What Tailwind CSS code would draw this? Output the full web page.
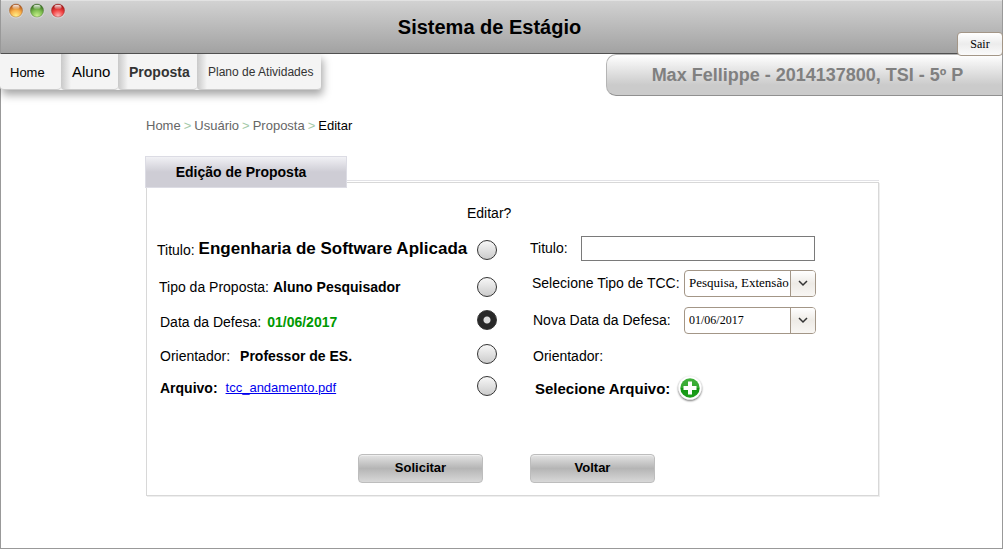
<!DOCTYPE html>
<html lang="pt-BR">
<head>
<meta charset="utf-8">
<meta name="viewport" content="width=device-width, initial-scale=1">
<title>Sistema de Estágio</title>
<script src="https://cdn.jsdelivr.net/npm/@tailwindcss/browser@4"></script>
</head>
<body class="bg-white font-['Liberation_Sans',Arial,sans-serif] text-sm text-black">
<div class="flex min-h-[calc(100vh-2px)] flex-col border-x border-b border-[#999] bg-white">

  <header class="relative flex h-[54px] items-center justify-center border-b border-[#505050] bg-linear-to-b from-[#d3d3d3] to-[#a2a2a2] shadow-[inset_0_1px_0_#e2e2e2]">
    <div class="absolute top-[3px] left-[7px] flex gap-1">
      <svg class="size-[17px]" viewBox="0 0 17 17" aria-hidden="true">
        <defs>
          <radialGradient id="amber" cx=".5" cy=".9" r=".85"><stop offset="0" stop-color="#fff08a"/><stop offset=".5" stop-color="#f9b14a"/><stop offset="1" stop-color="#a8480f"/></radialGradient>
          <radialGradient id="green" cx=".5" cy=".9" r=".85"><stop offset="0" stop-color="#c9f08d"/><stop offset=".5" stop-color="#7fbf52"/><stop offset="1" stop-color="#2c6416"/></radialGradient>
          <radialGradient id="red" cx=".5" cy=".9" r=".85"><stop offset="0" stop-color="#ffb5b5"/><stop offset=".5" stop-color="#f24444"/><stop offset="1" stop-color="#9c0a0a"/></radialGradient>
          <linearGradient id="gloss" x1="0" y1="0" x2="0" y2="1"><stop offset="0" stop-color="#fff" stop-opacity=".9"/><stop offset="1" stop-color="#fff" stop-opacity=".1"/></linearGradient>
        </defs>
        <circle cx="8" cy="8" r="7.500" fill="#e6e6e6" opacity=".6"/><circle cx="8" cy="7.500" r="6.600" fill="url(#amber)" stroke="#8a5a30" stroke-width=".4"/><ellipse cx="8" cy="4" rx="3.600" ry="2.200" fill="url(#gloss)"/>
      </svg>
      <svg class="size-[17px]" viewBox="0 0 17 17" aria-hidden="true"><circle cx="8" cy="8" r="7.500" fill="#e6e6e6" opacity=".6"/><circle cx="8" cy="7.500" r="6.600" fill="url(#green)" stroke="#4a6b3a" stroke-width=".4"/><ellipse cx="8" cy="4" rx="3.600" ry="2.200" fill="url(#gloss)"/></svg>
      <svg class="size-[17px]" viewBox="0 0 17 17" aria-hidden="true"><circle cx="8" cy="8" r="7.500" fill="#e6e6e6" opacity=".6"/><circle cx="8" cy="7.500" r="6.600" fill="url(#red)" stroke="#8a3030" stroke-width=".4"/><ellipse cx="8" cy="4" rx="3.600" ry="2.200" fill="url(#gloss)"/></svg>
    </div>
    <h1 class="pr-6 text-xl font-bold">Sistema de Estágio</h1>
    <button type="button" class="absolute -right-px -bottom-[3px] z-10 h-6 w-[46px] rounded border border-[#a39687] bg-linear-to-b from-white via-[#ececec] to-[#fafafa] font-['Liberation_Serif',serif] text-xs">Sair</button>
  </header>

  <div class="flex items-start justify-between">
    <nav class="-ml-px flex h-9 rounded-b bg-[#f4f4f4] text-[#333] shadow-[2px_5px_8px_rgba(0,0,0,0.35)]">
      <a href="#" class="flex w-[61px] items-center rounded-b border-b border-[#ccc] pt-1 pl-2.5 text-[13px] text-black">Home</a>
      <a href="#" class="flex w-[57px] items-center rounded-b border-b border-[#ccc] bg-linear-to-r from-[#c9c9c9] to-[#f4f4f4] to-[10px] pl-[11px] text-[15px] text-black">Aluno</a>
      <a href="#" class="flex w-[79px] items-center rounded-b border-b border-[#ccc] bg-linear-to-r from-[#c9c9c9] to-[#f4f4f4] to-[10px] pl-[11px] text-sm font-bold">Proposta</a>
      <a href="#" class="flex w-[124px] items-center rounded-b border-b border-[#ccc] bg-linear-to-r from-[#c9c9c9] to-[#f4f4f4] to-[10px] pl-[11px] text-xs whitespace-nowrap">Plano de Atividades</a>
    </nav>
    <p class="flex h-[42px] w-[396px] items-center justify-center rounded-l-[10px] border border-r-0 border-[#b5b5b5] border-b-[#909090] bg-linear-to-b from-white to-[#cbcbcb] to-75% pl-1.5 text-lg font-bold text-[#808080]">Max Fellippe - 2014137800, TSI - 5º P</p>
  </div>

  <main class="flex flex-col pt-[22px] pr-[123px] pl-[144px]">
    <nav aria-label="Trilha" class="flex h-4 items-center gap-[3px] pl-px text-[13px] text-[#666]">
      <a href="#">Home</a><span class="text-[#a3c9a8]">&gt;</span>
      <a href="#">Usuário</a><span class="text-[#a3c9a8]">&gt;</span>
      <a href="#">Proposta</a><span class="text-[#a3c9a8]">&gt;</span>
      <span class="text-black" aria-current="page">Editar</span>
    </nav>

    <h2 class="z-10 mt-[22px] flex h-8 w-[202px] items-center justify-center border border-[#dcdce4] bg-linear-to-b from-[#f1f1f5] via-[#cecdd5] to-[#cecdd5] pr-2.5 font-bold">Edição de Proposta</h2>

    <form class="-mt-1.5 ml-px border border-[#d8d8d8] pt-5 pb-3 pl-2.5 shadow-[1px_1px_0_#eee,0_-1px_0_#fff,0_-2px_0_#e2e2e6]" onsubmit="return false">
      <p class="pl-[310px] leading-5">Editar?</p>
      <div class="grid grid-cols-[341px_1fr] pt-2">
        <fieldset class="grid grid-rows-[37px_37px_34px_33px_32px] items-center">
          <div class="flex items-center justify-between"><span class="flex items-center gap-1">Titulo: <label for="r1" class="text-[17px] font-bold">Engenharia de Software Aplicada</label></span><input id="r1" name="editar" type="radio" class="mr-px size-5 appearance-none rounded-full border border-[#333] bg-linear-to-b from-[#f7f7f7] to-[#ccc] checked:bg-[radial-gradient(circle,#ddd_3px,#292929_4px)]"></div>
          <div class="flex items-center justify-between"><span class="flex items-center gap-1 pl-0.5">Tipo da Proposta: <label for="r2" class="font-bold">Aluno Pesquisador</label></span><input id="r2" name="editar" type="radio" class="mr-px size-5 appearance-none rounded-full border border-[#333] bg-linear-to-b from-[#f7f7f7] to-[#ccc] checked:bg-[radial-gradient(circle,#ddd_3px,#292929_4px)]"></div>
          <div class="flex items-center justify-between"><span class="flex items-center gap-1.5 pl-[3px]">Data da Defesa: <label for="r3" class="font-bold text-[#090]">01/06/2017</label></span><input id="r3" name="editar" type="radio" checked class="mr-px mb-1 size-5 appearance-none rounded-full border border-[#333] bg-linear-to-b from-[#f7f7f7] to-[#ccc] checked:bg-[radial-gradient(circle,#ddd_3px,#292929_4px)]"></div>
          <div class="flex items-center justify-between"><span class="flex items-center gap-2.5 pl-[3px]">Orientador: <label for="r4" class="font-bold">Professor de ES.</label></span><input id="r4" name="editar" type="radio" class="mr-px mb-1 size-5 appearance-none rounded-full border border-[#333] bg-linear-to-b from-[#f7f7f7] to-[#ccc] checked:bg-[radial-gradient(circle,#ddd_3px,#292929_4px)]"></div>
          <div class="flex items-center justify-between"><span class="flex items-center gap-2 pl-[3px]"><label for="r5" class="font-bold">Arquivo:</label> <a href="#" class="text-[13px] text-[#00e] underline">tcc_andamento.pdf</a></span><input id="r5" name="editar" type="radio" class="mr-px mb-1 size-5 appearance-none rounded-full border border-[#333] bg-linear-to-b from-[#f7f7f7] to-[#ccc] checked:bg-[radial-gradient(circle,#ddd_3px,#292929_4px)]"></div>
        </fieldset>

        <div class="grid grid-rows-[34px_36px_38px_34px_32px] items-center pl-8">
          <div class="flex items-center gap-[13px]"><label for="titulo">Titulo:</label><input id="titulo" type="text" class="h-[25px] w-[234px] border border-[#7a7a7a] bg-white px-1"></div>
          <div class="flex w-[286px] items-center justify-between pl-0.5"><label for="tipo" class="whitespace-nowrap">Selecione Tipo de TCC:</label>
            <div class="relative w-[132px] shrink-0">
              <select id="tipo" class="h-[27px] w-full appearance-none rounded border border-[#a39687] bg-white pl-1 font-['Liberation_Serif',serif] text-[13px]"><option>Pesquisa, Extensão</option></select>
              <span class="pointer-events-none absolute inset-y-px right-px flex w-[25px] items-center justify-center rounded-r-[3px] border-l border-[#a39687] bg-linear-to-b from-white via-[#eeebe6] to-[#f8f6f3]"><svg class="size-3" viewBox="0 0 12 12" fill="none" stroke="#333" stroke-width="1.500" aria-hidden="true"><path d="M2 4l4 4 4-4"/></svg></span>
            </div>
          </div>
          <div class="flex w-[286px] items-center justify-between pl-[3px]"><label for="data" class="whitespace-nowrap">Nova Data da Defesa:</label>
            <div class="relative w-[132px] shrink-0">
              <select id="data" class="h-[27px] w-full appearance-none rounded border border-[#a39687] bg-white pl-1 font-['Liberation_Serif',serif] text-xs"><option>01/06/2017</option></select>
              <span class="pointer-events-none absolute inset-y-px right-px flex w-[25px] items-center justify-center rounded-r-[3px] border-l border-[#a39687] bg-linear-to-b from-white via-[#eeebe6] to-[#f8f6f3]"><svg class="size-3" viewBox="0 0 12 12" fill="none" stroke="#333" stroke-width="1.500" aria-hidden="true"><path d="M2 4l4 4 4-4"/></svg></span>
            </div>
          </div>
          <p class="pl-[3px]">Orientador:</p>
          <div class="flex items-center gap-1.5 pl-[5px] font-bold"><label for="arquivo" class="text-[15px]">Selecione Arquivo:</label>
            <button id="arquivo" type="button" aria-label="Adicionar arquivo"><svg class="size-7" viewBox="0 0 28 28" aria-hidden="true"><defs><linearGradient id="add" x1="0" y1="0" x2="0" y2="1"><stop offset="0" stop-color="#3fb03a"/><stop offset=".5" stop-color="#35a932"/><stop offset=".52" stop-color="#129512"/><stop offset="1" stop-color="#1fa01c"/></linearGradient><filter id="shade" x="-20%" y="-20%" width="140%" height="150%"><feDropShadow dx="0" dy="1" stdDeviation="1.200" flood-color="#000" flood-opacity=".7"/></filter></defs><circle cx="14" cy="13" r="11.500" fill="#fff" filter="url(#shade)"/><circle cx="14" cy="13" r="9.700" fill="url(#add)"/><path d="M14 6.500v13M7.500 13h13" stroke="#fff" stroke-width="4"/></svg></button>
          </div>
        </div>
      </div>
      <div class="flex gap-[47px] pt-[49px] pl-[201px]">
        <button type="submit" class="h-[29px] w-[125px] rounded border border-[#bdbdbd] bg-linear-to-b from-[#e4e4e4] via-[#b5b5b5] to-[#d8d8d8] text-[13px] font-bold shadow-[inset_0_1px_0_#eee]">Solicitar</button>
        <button type="button" class="h-[29px] w-[125px] rounded border border-[#bdbdbd] bg-linear-to-b from-[#e4e4e4] via-[#b5b5b5] to-[#d8d8d8] text-[13px] font-bold shadow-[inset_0_1px_0_#eee]">Voltar</button>
      </div>
    </form>
  </main>
</div>
</body>
</html>
